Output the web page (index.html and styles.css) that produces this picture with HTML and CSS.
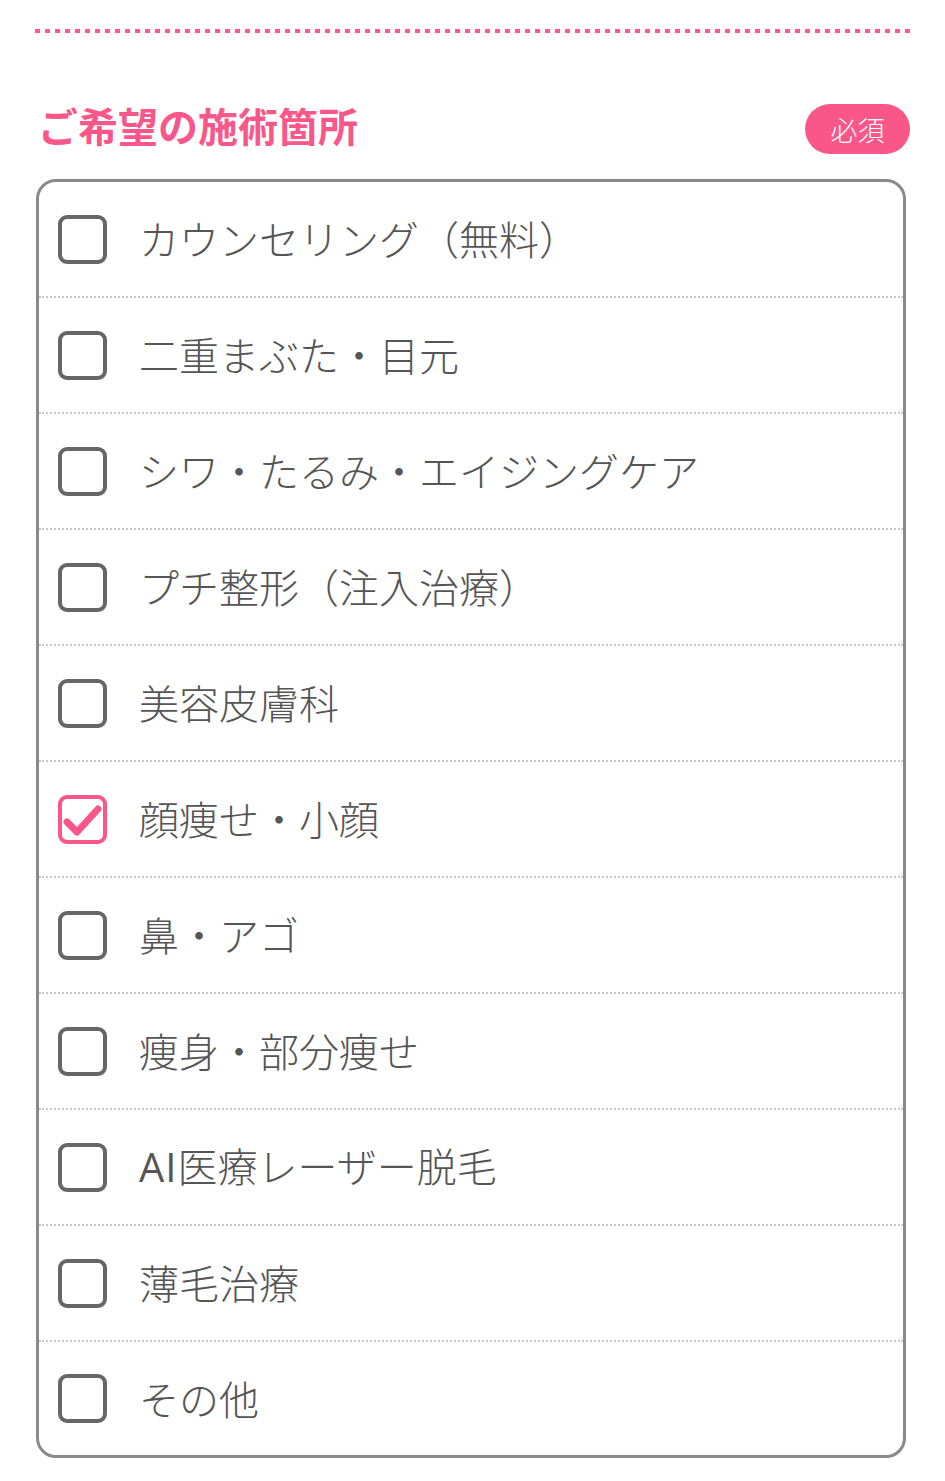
FILE: index.html
```html
<!DOCTYPE html>
<html lang="ja">
<head>
<meta charset="utf-8">
<link rel="stylesheet" href="styles.css">
</head>
<body>
<div class="page">
  <div class="divider"></div>
  <div class="header">
    <h2 class="title">ご希望の施術箇所</h2>
    <span class="badge">必須</span>
  </div>
  <ul class="box">
    <li class="row"><svg class="cb" viewBox="0 0 49 49"><rect x="2" y="2" width="45" height="45" rx="7"/></svg><span>カウンセリング（無料）</span></li>
    <li class="row"><svg class="cb" viewBox="0 0 49 49"><rect x="2" y="2" width="45" height="45" rx="7"/></svg><span>二重まぶた・目元</span></li>
    <li class="row"><svg class="cb" viewBox="0 0 49 49"><rect x="2" y="2" width="45" height="45" rx="7"/></svg><span>シワ・たるみ・エイジングケア</span></li>
    <li class="row"><svg class="cb" viewBox="0 0 49 49"><rect x="2" y="2" width="45" height="45" rx="7"/></svg><span>プチ整形（注入治療）</span></li>
    <li class="row"><svg class="cb" viewBox="0 0 49 49"><rect x="2" y="2" width="45" height="45" rx="7"/></svg><span>美容皮膚科</span></li>
    <li class="row"><svg class="cb checked" viewBox="0 0 49 49"><rect x="2" y="2" width="45" height="45" rx="7"/><path d="M9 27 L19 37 L40 14"/></svg><span>顔痩せ・小顔</span></li>
    <li class="row"><svg class="cb" viewBox="0 0 49 49"><rect x="2" y="2" width="45" height="45" rx="7"/></svg><span>鼻・アゴ</span></li>
    <li class="row"><svg class="cb" viewBox="0 0 49 49"><rect x="2" y="2" width="45" height="45" rx="7"/></svg><span>痩身・部分痩せ</span></li>
    <li class="row"><svg class="cb" viewBox="0 0 49 49"><rect x="2" y="2" width="45" height="45" rx="7"/></svg><span><span class="latin">AI</span>医療レーザー脱毛</span></li>
    <li class="row"><svg class="cb" viewBox="0 0 49 49"><rect x="2" y="2" width="45" height="45" rx="7"/></svg><span>薄毛治療</span></li>
    <li class="row"><svg class="cb" viewBox="0 0 49 49"><rect x="2" y="2" width="45" height="45" rx="7"/></svg><span>その他</span></li>
  </ul>
</div>
</body>
</html>
```

FILE: styles.css
```css
* { box-sizing: border-box; }
html, body { margin: 0; padding: 0; background: #fff; }
body {
  font-family: "Noto Sans CJK JP", "Noto Sans", sans-serif;
  color: #555;
}
.page {
  padding: 29px 35px 0 36px;
}
.divider {
  height: 4px;
  margin-left: -1px;
  background: repeating-linear-gradient(to right, #fb5a8c 0 5px, transparent 5px 10px);
}
.header {
  display: flex;
  align-items: center;
  justify-content: space-between;
  margin-top: 71px;
  height: 50px;
}
.title {
  margin: 0 0 8px 2px;
  font-size: 40px;
  font-weight: 700;
  color: #f9578a;
  line-height: 1;
}
.badge {
  display: flex;
  align-items: center;
  justify-content: center;
  width: 105px;
  height: 50px;
  border-radius: 25px;
  background: #f9578a;
  color: #fff;
  font-size: 27px;
  font-weight: 300;
}
.box {
  list-style: none;
  margin: 25px 4px 0 0;
  padding: 0;
  border: 3px solid #8a8a8a;
  border-radius: 20px;
}
.row {
  display: flex;
  align-items: center;
  height: 116px;
  padding-left: 19px;
  border-bottom: 2px dotted #c8c8c8;
  font-size: 40px;
  font-weight: 300;
  line-height: 1;
  color: #555;
}
.row:last-child {
  border-bottom: none;
  height: 113px;
}
.row > span { margin-left: 32px; margin-top: -2px; }
.latin { font-family: "Open Sans", "Noto Sans", sans-serif; font-weight: 400; letter-spacing: 1px; }
.cb {
  width: 49px;
  height: 49px;
  flex: none;
  fill: none;
  stroke: #666;
  stroke-width: 4;
}
.cb.checked { stroke: #f9578a; }
.cb.checked path {
  stroke-width: 7;
  stroke-linecap: round;
  stroke-linejoin: round;
}
```
